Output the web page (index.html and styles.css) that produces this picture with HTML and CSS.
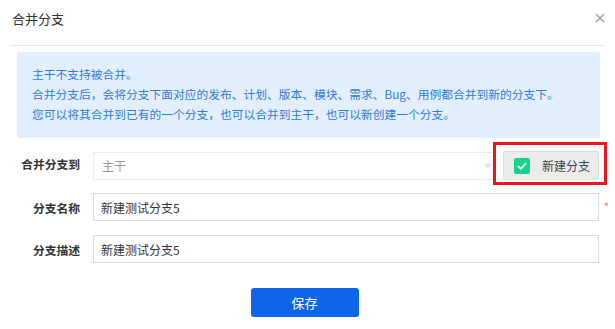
FILE: index.html
```html
<!DOCTYPE html>
<html lang="zh-CN">
<head>
  <meta charset="UTF-8">
  <title>合并分支</title>
  <link rel="stylesheet" href="styles.css">
</head>
<body>
  <div class="dialog">
    <div class="dialog-head">
      <span class="dialog-title">合并分支</span>
      <svg class="close" width="10" height="10" viewBox="0 0 10 10">
        <path d="M1 1 L9 9 M9 1 L1 9" stroke="#8fa0ba" stroke-width="1.3" fill="none"/>
      </svg>
    </div>

    <div class="tip">
      <p>主干不支持被合并。</p>
      <p>合并分支后，会将分支下面对应的发布、计划、版本、模块、需求、Bug、用例都合并到新的分支下。</p>
      <p>您可以将其合并到已有的一个分支，也可以合并到主干，也可以新创建一个分支。</p>
    </div>

    <form class="form">
      <div class="row row-first">
        <label class="label">合并分支到</label>
        <div class="select">
          <span class="placeholder">主干</span>
          <span class="caret"></span>
        </div>
        <div class="mark">
          <div class="new-btn">
            <span class="check">
              <svg width="10" height="8" viewBox="0 0 10 8">
                <path d="M1 4 L4 6.8 L9 1.2" stroke="#fff" stroke-width="1.8" fill="none"/>
              </svg>
            </span>
            <span>新建分支</span>
          </div>
        </div>
      </div>

      <div class="row">
        <label class="label">分支名称</label>
        <input class="input" type="text" value="新建测试分支5">
        <span class="req">*</span>
      </div>

      <div class="row">
        <label class="label">分支描述</label>
        <input class="input" type="text" value="新建测试分支5">
        <span class="req"></span>
      </div>

      <div class="actions">
        <button type="button" class="save">保存</button>
      </div>
    </form>
  </div>
</body>
</html>
```

FILE: styles.css
```css
body {
  margin: 0;
  background: #fff;
  font-family: "Noto Sans CJK SC", "Noto Sans", sans-serif;
  color: #333;
}

.dialog {
  padding: 0 0 0 10px;
}

.dialog-head {
  display: flex;
  align-items: center;
  justify-content: space-between;
  height: 46px;
  margin-right: 10px;
  padding: 0 1px 9px 2px;
  box-sizing: border-box;
  border-bottom: 1px solid #e6e6e6;
}

.dialog-title {
  font-size: 13px;
  color: #333;
}

.close {
  margin-right: -1px;
}

.tip {
  margin: 6px 15px 0 7px;
  padding: 12px 16px 14px 15px;
  background: #e3effc;
  border-radius: 3px;
  color: #2f7be3;
  font-size: 11.75px;
  line-height: 20px;
}

.tip p {
  margin: 0;
}

.form {
  margin: 0;
}

.row {
  display: flex;
  align-items: center;
  height: 28px;
  margin-top: 14px;
}

.row-first {
  height: 43px;
  margin-top: 4px;
  margin-bottom: -6px;
}

.label {
  width: 70px;
  margin-right: 13px;
  text-align: right;
  font-size: 11.75px;
  font-weight: bold;
  color: #333;
}

.select {
  flex: 1;
  height: 28px;
  margin-top: 4px;
  display: flex;
  align-items: center;
  justify-content: space-between;
  padding: 0 0 0 8px;
  box-sizing: border-box;
  border: 1px solid #ececec;
  border-right: none;
  font-size: 12px;
}

.placeholder {
  color: #9a9a9a;
}

.caret {
  width: 0;
  height: 0;
  margin-right: 1px;
  border-left: 4px solid transparent;
  border-right: 4px solid transparent;
  border-top: 4px solid #e0e0e0;
}

.mark {
  width: 114px;
  height: 43px;
  margin-right: 8px;
  padding: 6px 5px 2px 7px;
  box-sizing: border-box;
  border: 3px solid #e8171e;
}

.new-btn {
  display: flex;
  align-items: center;
  height: 29px;
  padding-left: 10px;
  box-sizing: border-box;
  background: #ececec;
  border: 1px solid #dedede;
  border-radius: 2px;
  font-size: 12px;
  color: #3d4451;
}

.check {
  display: flex;
  align-items: center;
  justify-content: center;
  width: 16px;
  height: 16px;
  margin-right: 12px;
  background: #19d38a;
  border-radius: 2px;
}

.input {
  flex: 1;
  height: 28px;
  padding: 0 7px;
  box-sizing: border-box;
  border: 1px solid #dcdcdc;
  font-family: inherit;
  font-size: 12px;
  color: #333;
  outline: none;
}

.req {
  width: 16px;
  padding-left: 5px;
  box-sizing: border-box;
  color: #f26d6d;
  font-size: 11px;
  margin-top: -2px;
}

.actions {
  display: flex;
  justify-content: center;
  margin-top: 25px;
  padding-right: 16px;
}

.save {
  width: 108px;
  height: 29px;
  border: none;
  border-radius: 3px;
  background: #0d66e9;
  color: #fff;
  font-family: inherit;
  font-size: 13px;
}
```
